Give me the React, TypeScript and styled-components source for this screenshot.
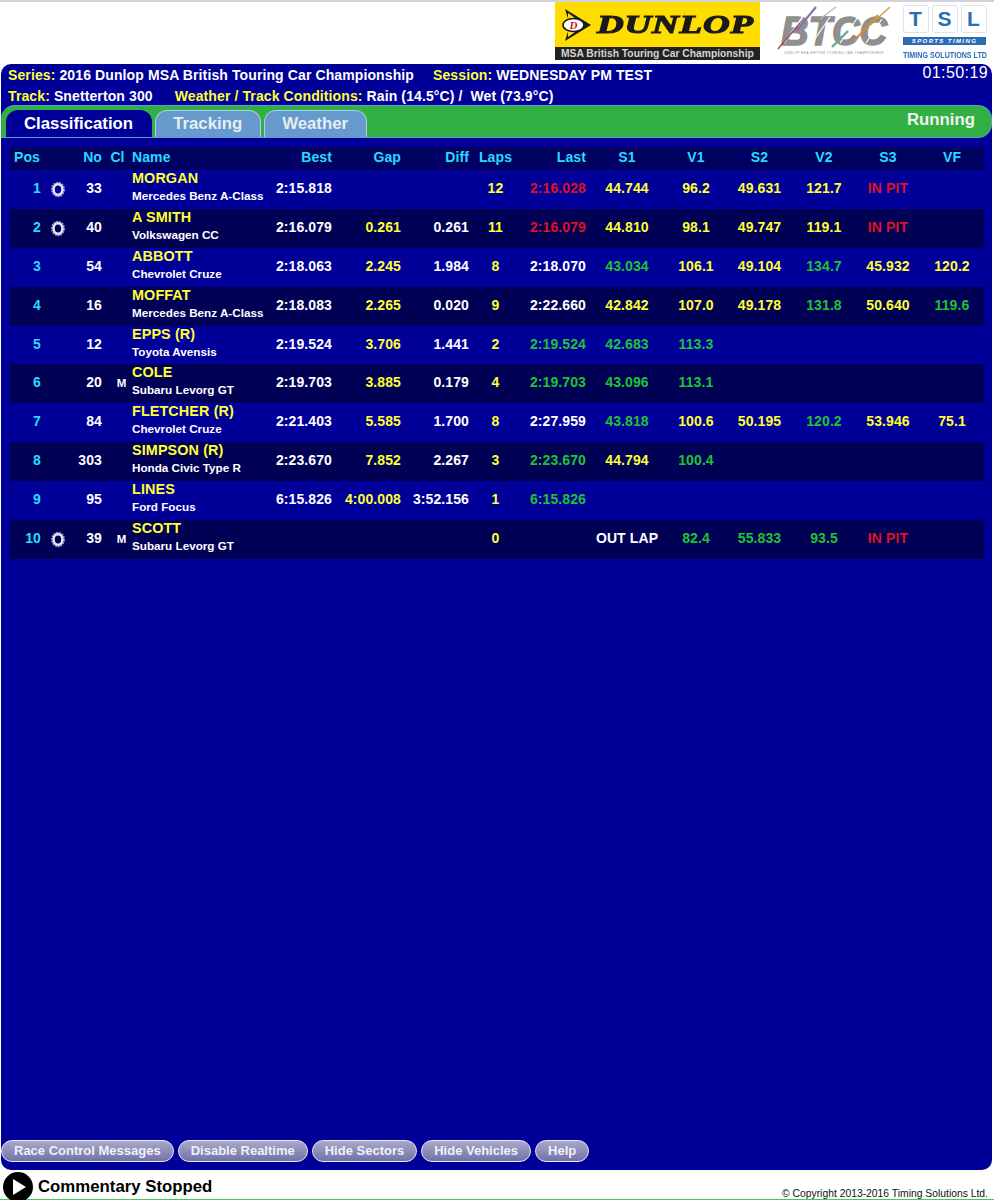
import React from 'react';
import styled, { createGlobalStyle } from 'styled-components';

const YELLOW = '#ffff33';
const CYAN = '#22ddff';
const GREEN = '#1cc433';
const RED = '#dd1122';
const WHITE = '#ffffff';

const COLUMNS = '34px 28px 33px 25px 142px 63px 69px 68px 47px 70px 76px 62px 65px 64px 64px 64px';

interface Driver {
  pos: number;
  pit?: boolean;
  no: number;
  cl?: string;
  name: string;
  car: string;
  best?: string;
  gap?: string;
  diff?: string;
  laps: number;
  last?: [string, string];
  s1?: [string, string];
  v1?: [string, string];
  s2?: [string, string];
  v2?: [string, string];
  s3?: [string, string];
  vf?: [string, string];
}

const drivers: Driver[] = [
  { pos: 1, pit: true, no: 33, name: 'MORGAN', car: 'Mercedes Benz A-Class', best: '2:15.818', laps: 12, last: ['2:16.028', RED], s1: ['44.744', YELLOW], v1: ['96.2', YELLOW], s2: ['49.631', YELLOW], v2: ['121.7', YELLOW], s3: ['IN PIT', RED] },
  { pos: 2, pit: true, no: 40, name: 'A SMITH', car: 'Volkswagen CC', best: '2:16.079', gap: '0.261', diff: '0.261', laps: 11, last: ['2:16.079', RED], s1: ['44.810', YELLOW], v1: ['98.1', YELLOW], s2: ['49.747', YELLOW], v2: ['119.1', YELLOW], s3: ['IN PIT', RED] },
  { pos: 3, no: 54, name: 'ABBOTT', car: 'Chevrolet Cruze', best: '2:18.063', gap: '2.245', diff: '1.984', laps: 8, last: ['2:18.070', WHITE], s1: ['43.034', GREEN], v1: ['106.1', YELLOW], s2: ['49.104', YELLOW], v2: ['134.7', GREEN], s3: ['45.932', YELLOW], vf: ['120.2', YELLOW] },
  { pos: 4, no: 16, name: 'MOFFAT', car: 'Mercedes Benz A-Class', best: '2:18.083', gap: '2.265', diff: '0.020', laps: 9, last: ['2:22.660', WHITE], s1: ['42.842', YELLOW], v1: ['107.0', YELLOW], s2: ['49.178', YELLOW], v2: ['131.8', GREEN], s3: ['50.640', YELLOW], vf: ['119.6', GREEN] },
  { pos: 5, no: 12, name: 'EPPS (R)', car: 'Toyota Avensis', best: '2:19.524', gap: '3.706', diff: '1.441', laps: 2, last: ['2:19.524', GREEN], s1: ['42.683', GREEN], v1: ['113.3', GREEN] },
  { pos: 6, no: 20, cl: 'M', name: 'COLE', car: 'Subaru Levorg GT', best: '2:19.703', gap: '3.885', diff: '0.179', laps: 4, last: ['2:19.703', GREEN], s1: ['43.096', GREEN], v1: ['113.1', GREEN] },
  { pos: 7, no: 84, name: 'FLETCHER (R)', car: 'Chevrolet Cruze', best: '2:21.403', gap: '5.585', diff: '1.700', laps: 8, last: ['2:27.959', WHITE], s1: ['43.818', GREEN], v1: ['100.6', YELLOW], s2: ['50.195', YELLOW], v2: ['120.2', GREEN], s3: ['53.946', YELLOW], vf: ['75.1', YELLOW] },
  { pos: 8, no: 303, name: 'SIMPSON (R)', car: 'Honda Civic Type R', best: '2:23.670', gap: '7.852', diff: '2.267', laps: 3, last: ['2:23.670', GREEN], s1: ['44.794', YELLOW], v1: ['100.4', GREEN] },
  { pos: 9, no: 95, name: 'LINES', car: 'Ford Focus', best: '6:15.826', gap: '4:00.008', diff: '3:52.156', laps: 1, last: ['6:15.826', GREEN] },
  { pos: 10, pit: true, no: 39, cl: 'M', name: 'SCOTT', car: 'Subaru Levorg GT', laps: 0, s1: ['OUT LAP', WHITE], v1: ['82.4', GREEN], s2: ['55.833', GREEN], v2: ['93.5', GREEN], s3: ['IN PIT', RED] },
];

const GlobalStyle = createGlobalStyle`
  html, body {
    margin: 0;
    padding: 0;
    background: #fff;
    font-family: "Liberation Sans", Arial, sans-serif;
  }
`;

const Page = styled.div`
  width: 994px;
  height: 1200px;
  display: flex;
  flex-direction: column;
  border-top: 2px solid #d2d2d8;
  box-sizing: border-box;
  overflow: hidden;
`;

const Logos = styled.header`
  height: 62px;
  flex: none;
  display: flex;
  justify-content: flex-end;
  align-items: flex-start;
  padding-right: 8px;
`;

const DunlopLogo = styled.div`
  width: 205px;
  height: 58px;
  margin-right: 10px;
  background: #ffdd00;
  display: flex;
  flex-direction: column;
  justify-content: flex-end;
  overflow: hidden;
`;

const DunlopMark = styled.div`
  flex: 1;
  display: flex;
  align-items: center;
  padding-left: 7px;
  gap: 5px;
`;

const DunlopWord = styled.span`
  font-family: "Liberation Serif", serif;
  font-weight: 700;
  font-style: italic;
  font-size: 26px;
  letter-spacing: 0.6px;
  color: #1a1a1a;
  transform: scaleX(1.42);
  transform-origin: left center;
  -webkit-text-stroke: 1.2px #1a1a1a;
`;

const DunlopStrap = styled.div`
  height: 13px;
  background: #222;
  color: #d4d4d4;
  font-size: 10.3px;
  font-weight: 700;
  line-height: 13px;
  padding-left: 6px;
  white-space: nowrap;
`;

const BtccLogo = styled.div`
  width: 125px;
  height: 52px;
  margin-right: 8px;
  margin-top: 3px;
`;

const TslLogo = styled.div`
  width: 83px;
  display: flex;
  flex-direction: column;
  align-items: center;
  margin-top: 3px;
`;

const TslLetters = styled.div`
  display: flex;
  gap: 3px;
`;

const TslLetter = styled.span`
  width: 26px;
  height: 28px;
  border: 1px solid #dde3ea;
  border-radius: 3px;
  box-sizing: border-box;
  color: #2a6db5;
  font-size: 21px;
  font-weight: 700;
  line-height: 26px;
  text-align: center;
`;

const TslBand = styled.div`
  width: 83px;
  height: 8px;
  margin-top: 4px;
  background: #2a6db5;
  color: #fff;
  font-size: 6px;
  font-weight: 700;
  font-style: italic;
  letter-spacing: 1.4px;
  line-height: 8px;
  text-align: center;
  white-space: nowrap;
`;

const TslName = styled.div`
  margin-top: 5px;
  color: #2a6db5;
  font-size: 8.5px;
  line-height: 10px;
  font-weight: 700;
  white-space: nowrap;
  transform: scaleX(0.84);
`;

const Panel = styled.main`
  width: 991px;
  height: 1106px;
  margin-left: 1px;
  flex: none;
  box-sizing: border-box;
  background: #000099;
  border-radius: 10px;
  display: flex;
  flex-direction: column;
`;

const InfoBlock = styled.div`
  height: 41px;
  box-sizing: border-box;
  padding: 2px 7px 0;
  display: flex;
  justify-content: space-between;
`;

const InfoLines = styled.div`
  display: flex;
  flex-direction: column;
  gap: 3px;
`;

const InfoLine = styled.div<{ $gap: number }>`
  display: flex;
  gap: ${p => p.$gap}px;
  font-size: 14px;
  letter-spacing: 0.11px;
  line-height: 18px;
  font-weight: 700;
  color: #fff;
  white-space: pre;
`;

const Key = styled.span`
  color: ${YELLOW};
`;

const Clock = styled.div`
  color: #fff;
  font-size: 16px;
  line-height: 14px;
  letter-spacing: 0.4px;
  margin-right: -3px;
`;

const TabBar = styled.div`
  height: 33px;
  flex: none;
  box-sizing: border-box;
  background: #33b044;
  border: 1px solid #5a9bd0;
  border-left: none;
  border-radius: 14px 14px 14px 0;
  display: flex;
  align-items: flex-end;
  justify-content: space-between;
  padding-left: 4.5px;
`;

const Tabs = styled.div`
  display: flex;
  gap: 3px;
`;

const Tab = styled.div<{ $active?: boolean }>`
  height: 27px;
  box-sizing: border-box;
  padding: 0 17.5px;
  border-radius: 12px 12px 0 0;
  border: 1px solid ${p => (p.$active ? '#000099' : '#a9cfe4')};
  border-bottom: none;
  background: ${p => (p.$active ? '#000099' : '#6699cc')};
  color: ${p => (p.$active ? '#fff' : '#e6eef5')};
  font-size: 16.8px;
  font-weight: 700;
  line-height: 26px;
`;

const Status = styled.div`
  align-self: center;
  margin: 0 16px 4px 0;
  color: #eef5ee;
  font-size: 16.8px;
  font-weight: 700;
`;

const Table = styled.div`
  margin: 9px 8px 0 9px;
  font-size: 14px;
  letter-spacing: 0.1px;
  font-weight: 700;
  color: #fff;
`;

const HeaderRow = styled.div`
  display: grid;
  grid-template-columns: ${COLUMNS};
  height: 23px;
  line-height: 21px;
  background: #000060;
  color: ${CYAN};
`;

const Row = styled.div`
  display: grid;
  grid-template-columns: ${COLUMNS};
  height: 38.9px;
  line-height: 37px;
  &:nth-child(odd) {
    background: #000055;
  }
`;

const Cell = styled.div<{ $align?: 'left' | 'right' | 'center'; $color?: string; $pad?: number }>`
  text-align: ${p => p.$align ?? 'center'};
  color: ${p => p.$color ?? 'inherit'};
  padding-right: ${p => p.$pad ?? 0}px;
  white-space: nowrap;
`;

const NameHeader = styled.div`
  padding-left: 2px;
`;

const ClassCell = styled.div`
  font-size: 11.5px;
  text-align: center;
  padding: 1px 0 0 8px;
`;

const TyreCell = styled.div`
  display: flex;
  align-items: center;
  justify-content: center;
`;

const NameCell = styled.div`
  padding-left: 2px;
  display: flex;
  flex-direction: column;
  white-space: nowrap;
`;

const DriverName = styled.span`
  color: ${YELLOW};
  font-size: 14.4px;
  line-height: 16px;
`;

const CarName = styled.span`
  color: #fff;
  font-size: 11.7px;
  letter-spacing: 0;
  line-height: 18px;
  margin-top: 1px;
`;

const Toolbar = styled.div`
  margin-top: auto;
  display: flex;
  gap: 4px;
  padding-bottom: 8px;
`;

const PillButton = styled.button`
  height: 22px;
  padding: 0 12px;
  box-sizing: border-box;
  border: 1px solid #e8e8f4;
  border-radius: 11px;
  background: linear-gradient(#a9a9cc, #7272a8);
  color: #f0f0f6;
  font-family: inherit;
  font-size: 13px;
  font-weight: 700;
  line-height: 20px;
  white-space: nowrap;
`;

const Footer = styled.footer`
  flex: 1;
  min-height: 0;
  display: flex;
  align-items: flex-start;
  justify-content: space-between;
  border-bottom: 1px solid #44cc55;
  padding: 0 6px 0 3px;
`;

const Commentary = styled.div`
  display: flex;
  align-items: center;
  gap: 5px;
  margin-top: 2px;
  color: #000;
  font-size: 16.8px;
  font-weight: 700;
`;

const Copyright = styled.div`
  margin-top: 18px;
  color: #111;
  font-size: 10.35px;
  line-height: 11px;
`;

const TyreSvg = styled.svg`
  filter: blur(0.7px);
`;

const TyreIcon = () => (
  <TyreSvg width="16" height="18" viewBox="0 0 16 18">
    <ellipse cx="8" cy="9.5" rx="5.4" ry="6.2" fill="none" stroke="#9aa2c4" strokeWidth="3" strokeDasharray="1.8 0.7" />
    <ellipse cx="8" cy="9.5" rx="4.4" ry="5.2" fill="none" stroke="#e2e6f2" strokeWidth="2.4" />
  </TyreSvg>
);

const PlayIcon = () => (
  <svg width="30" height="30" viewBox="0 0 30 30">
    <circle cx="15" cy="15" r="15" fill="#000" />
    <path d="M10 7 L23 15 L10 23 Z" fill="#fff" />
  </svg>
);

const DunlopBadge = () => (
  <svg width="30" height="36" viewBox="0 0 30 36">
    <path d="M3 2 L29 18 L3 34 L8 18 Z" fill="#1a1a1a" />
    <path d="M6 6 L23 18 L6 30 Z" fill="#ffdd00" />
    <ellipse cx="11.5" cy="18" rx="10.5" ry="6.5" fill="#fff" stroke="#1a1a1a" strokeWidth="1.6" />
    <text x="11.5" y="22" textAnchor="middle" fontSize="11" fontWeight="700" fontStyle="italic" fill="#d01010" fontFamily="Liberation Serif">D</text>
  </svg>
);

const stripes: [string, number, number, number, number, number][] = [
  ['#ffffff', 14, 38, 34, 10, 1.4],
  ['#ffffff', 42, 38, 60, 12, 1.2],
  ['#ffffff', 70, 38, 88, 12, 1.2],
  ['#ffffff', 96, 38, 112, 14, 1.2],
  ['#8a6bb0', 26, 26, 46, 2, 2],
  ['#9a4a5a', 8, 44, 30, 18, 1.4],
  ['#c9a23a', 100, 20, 120, 2, 1.4],
  ['#d98a3a', 84, 36, 108, 10, 2],
  ['#6aa89a', 62, 42, 78, 26, 2.4],
  ['#b5b5b5', 50, 14, 66, 2, 1.2],
];

const BtccMark = () => (
  <svg width="125" height="52" viewBox="0 0 125 52">
    <text x="11" y="40" fontSize="40" fontFamily="Liberation Sans" fontWeight="700" fontStyle="italic" fill="#8f8f8f" stroke="#8f8f8f" strokeWidth="1.6" textLength="106" lengthAdjust="spacingAndGlyphs">BTCC</text>
    {stripes.map(([c, x1, y1, x2, y2, w]) => (
      <line key={`${x1}-${y1}`} x1={x1} y1={y1} x2={x2} y2={y2} stroke={c} strokeWidth={w} />
    ))}
    <text x="64" y="49" textAnchor="middle" fontSize="3" letterSpacing="0.5" fill="#888" fontFamily="Liberation Sans">DUNLOP MSA BRITISH TOURING CAR CHAMPIONSHIP</text>
  </svg>
);

const Colored = ({ value }: { value?: [string, string] }) => (
  <Cell $color={value?.[1]}>{value?.[0]}</Cell>
);

export default function App() {
  return (
    <>
      <GlobalStyle />
      <Page>
        <Logos>
          <DunlopLogo>
            <DunlopMark>
              <DunlopBadge />
              <DunlopWord>DUNLOP</DunlopWord>
            </DunlopMark>
            <DunlopStrap>MSA British Touring Car Championship</DunlopStrap>
          </DunlopLogo>
          <BtccLogo>
            <BtccMark />
          </BtccLogo>
          <TslLogo>
            <TslLetters>
              <TslLetter>T</TslLetter>
              <TslLetter>S</TslLetter>
              <TslLetter>L</TslLetter>
            </TslLetters>
            <TslBand>SPORTS TIMING</TslBand>
            <TslName>TIMING SOLUTIONS LTD</TslName>
          </TslLogo>
        </Logos>
        <Panel>
          <InfoBlock>
            <InfoLines>
              <InfoLine $gap={19}>
                <span><Key>Series:</Key> 2016 Dunlop MSA British Touring Car Championship</span>
                <span><Key>Session:</Key> WEDNESDAY PM TEST</span>
              </InfoLine>
              <InfoLine $gap={22}>
                <span><Key>Track:</Key> Snetterton 300</span>
                <span><Key>Weather / Track Conditions:</Key> Rain (14.5°C) /  Wet (73.9°C)</span>
              </InfoLine>
            </InfoLines>
            <Clock>01:50:19</Clock>
          </InfoBlock>
          <TabBar>
            <Tabs>
              <Tab $active>Classification</Tab>
              <Tab>Tracking</Tab>
              <Tab>Weather</Tab>
            </Tabs>
            <Status>Running</Status>
          </TabBar>
          <Table>
            <HeaderRow>
              <Cell $align="right" $pad={4}>Pos</Cell>
              <div />
              <Cell $align="right" $pad={3}>No</Cell>
              <Cell>Cl</Cell>
              <NameHeader>Name</NameHeader>
              <Cell $align="right" $pad={3}>Best</Cell>
              <Cell $align="right" $pad={3}>Gap</Cell>
              <Cell $align="right" $pad={3}>Diff</Cell>
              <Cell>Laps</Cell>
              <Cell $align="right" $pad={3}>Last</Cell>
              <Cell>S1</Cell>
              <Cell>V1</Cell>
              <Cell>S2</Cell>
              <Cell>V2</Cell>
              <Cell>S3</Cell>
              <Cell>VF</Cell>
            </HeaderRow>
            {drivers.map(d => (
              <Row key={d.pos}>
                <Cell $align="right" $color={CYAN} $pad={3}>{d.pos}</Cell>
                <TyreCell>{d.pit && <TyreIcon />}</TyreCell>
                <Cell $align="right" $pad={3}>{d.no}</Cell>
                <ClassCell>{d.cl}</ClassCell>
                <NameCell>
                  <DriverName>{d.name}</DriverName>
                  <CarName>{d.car}</CarName>
                </NameCell>
                <Cell $align="right" $pad={3}>{d.best}</Cell>
                <Cell $align="right" $pad={3} $color={YELLOW}>{d.gap}</Cell>
                <Cell $align="right" $pad={3}>{d.diff}</Cell>
                <Cell $color={YELLOW}>{d.laps}</Cell>
                <Cell $align="right" $pad={3} $color={d.last?.[1]}>{d.last?.[0]}</Cell>
                <Colored value={d.s1} />
                <Colored value={d.v1} />
                <Colored value={d.s2} />
                <Colored value={d.v2} />
                <Colored value={d.s3} />
                <Colored value={d.vf} />
              </Row>
            ))}
          </Table>
          <Toolbar>
            <PillButton>Race Control Messages</PillButton>
            <PillButton>Disable Realtime</PillButton>
            <PillButton>Hide Sectors</PillButton>
            <PillButton>Hide Vehicles</PillButton>
            <PillButton>Help</PillButton>
          </Toolbar>
        </Panel>
        <Footer>
          <Commentary>
            <PlayIcon />
            Commentary Stopped
          </Commentary>
          <Copyright>© Copyright 2013-2016 Timing Solutions Ltd.</Copyright>
        </Footer>
      </Page>
    </>
  );
}
